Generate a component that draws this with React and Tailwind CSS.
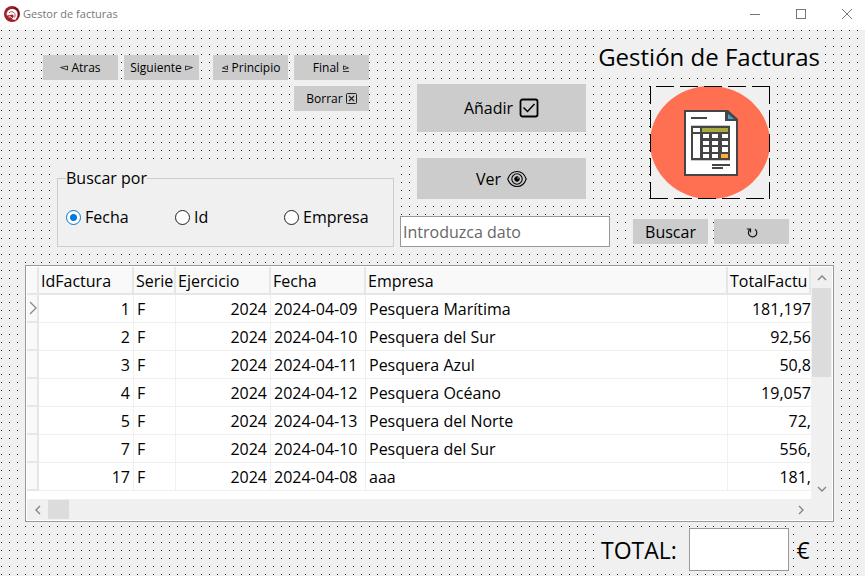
import React from "react";

const invoices = [
  { id: 1, serie: "F", year: 2024, date: "2024-04-09", company: "Pesquera Marítima", total: "181,197" },
  { id: 2, serie: "F", year: 2024, date: "2024-04-10", company: "Pesquera del Sur", total: "92,56" },
  { id: 3, serie: "F", year: 2024, date: "2024-04-11", company: "Pesquera Azul", total: "50,8" },
  { id: 4, serie: "F", year: 2024, date: "2024-04-12", company: "Pesquera Océano", total: "19,057" },
  { id: 5, serie: "F", year: 2024, date: "2024-04-13", company: "Pesquera del Norte", total: "72," },
  { id: 7, serie: "F", year: 2024, date: "2024-04-10", company: "Pesquera del Sur", total: "556," },
  { id: 17, serie: "F", year: 2024, date: "2024-04-08", company: "aaa", total: "181," },
];

function AppLogo() {
  return (
    <svg width="16" height="16" viewBox="0 0 16 16" aria-hidden="true">
      <circle cx="8" cy="8" r="8" fill="#a01f29" />
      <path d="M10 1.500a7 7 0 0 1 4 9.500" fill="none" stroke="#641118" strokeWidth="1.500" />
      <path d="M2.500 7.500C3.200 4.500 6 2.600 8.800 3c3 .3 5 2.600 4.700 5.600-.1 2-.8 3.600-2.200 5.400L7.500 13l1.800-1.800c.6-1 .4-2-.5-2.500-.9-.5-1.900-.1-3.100.5-.9.300-1.500.2-1.700-.4L3 10z" fill="#fff" />
      <path d="M5 6.800c1.400-1.300 3.600-1.500 5-.2 1.300 1.200 1.400 3 .6 5" fill="none" stroke="#a01f29" strokeWidth="0.800" />
      <path d="m4.500 11 2-.3 1.200 1.300" fill="none" stroke="#fff" strokeWidth="0.900" />
    </svg>
  );
}

function Triangle({ flip, underline }) {
  return (
    <svg width="8" height="10" viewBox="0 0 8 10" fill="none" stroke="#222" strokeWidth="0.900" aria-hidden="true">
      <g transform={flip ? "translate(8 0) scale(-1 1)" : undefined}>
        {underline ? (
          <path d="M6.500 2.800v3.700L1.500 5zM1 8.500h6" />
        ) : (
          <path d="M7.500 3v4L.5 4.500z" />
        )}
      </g>
    </svg>
  );
}

function BoxedCross() {
  return (
    <svg width="11" height="11" viewBox="0 0 11 11" fill="none" stroke="#222" aria-hidden="true">
      <rect x="0.500" y="0.500" width="10" height="10" rx="1" />
      <path d="m3 3 5 5M8 3 3 8" strokeWidth="1.200" />
    </svg>
  );
}

function BoxedCheck() {
  return (
    <svg width="20" height="20" viewBox="0 0 20 20" fill="none" stroke="#000" aria-hidden="true">
      <rect x="1.500" y="1.500" width="17" height="17" rx="2" strokeWidth="1.800" />
      <path d="m4.500 9.500 4 4 7-7.500" strokeWidth="1.500" />
    </svg>
  );
}

function Eye() {
  return (
    <svg width="20" height="18" viewBox="0 0 20 18" fill="none" stroke="#000" aria-hidden="true">
      <path d="M.8 9C2.500 4 6 1.500 10 1.500S17.500 4 19.200 9c-1.700 5-5.200 7.500-9.200 7.500S2.500 14 .8 9z" strokeWidth="1.100" />
      <circle cx="10" cy="9" r="5.200" strokeWidth="1.100" />
      <circle cx="10" cy="9" r="2.300" fill="#000" />
      <circle cx="11" cy="8" r="0.700" fill="#ccc" stroke="none" />
    </svg>
  );
}

function Reload() {
  return (
    <svg width="12" height="12" viewBox="0 0 12 12" fill="none" stroke="#111" strokeWidth="1.200" aria-hidden="true">
      <path d="M9 3.200a4.200 4.200 0 1 1-5.200.3" />
      <path d="M.8 3h3.700v3.500" />
    </svg>
  );
}

function InvoicePicture() {
  return (
    <svg width="120" height="113" viewBox="0 0 120 113" role="img" aria-label="Factura">
      <rect width="120" height="113" fill="#f0f0f0" />
      <ellipse cx="60" cy="56.500" rx="60" ry="56.500" fill="#ff7053" />
      <path d="M6 .5h114M0 112.500h120" stroke="#000" strokeDasharray="18 6" />
      <path d="M.5 0v113M119.500 0v113" stroke="#000" strokeDasharray="18 6" />
      <path d="M35 25h41l11 10v54H35z" fill="#fff" stroke="#454545" strokeWidth="2" />
      <path d="M75 24h3l10 9v2H75z" fill="#454545" />
      <path d="M78 28v5h6z" fill="#35a8e0" />
      <path d="M41 32h16" stroke="#454545" strokeWidth="2" />
      <path d="M41 39.500h39M41 74.500h39" stroke="#c8c8c8" />
      <rect x="41" y="40" width="39" height="34" fill="#454545" />
      <rect x="43" y="42" width="7" height="4" fill="#fff" />
      <rect x="52" y="42" width="26" height="4" fill="#aaab3f" />
      <rect x="43" y="48" width="7" height="24" fill="#fff" />
      <g fill="#fff">
        <path d="M53 48h6v4h-6zM62 48h6v4h-6zM72 48h6v4h-6z" />
        <path d="M53 55h6v4h-6zM62 55h6v4h-6zM72 55h6v4h-6z" />
        <path d="M53 61h6v5h-6zM62 61h6v5h-6zM72 61h6v5h-6z" />
        <path d="M53 68h6v4h-6zM62 68h6v4h-6z" />
      </g>
      <rect x="71" y="68" width="7" height="4" fill="#fbb034" />
      <path d="M62 79h18M62 82h11" stroke="#454545" strokeWidth="2" />
    </svg>
  );
}

function Chevron({ d }) {
  return (
    <svg width="10" height="10" viewBox="0 0 10 10" fill="none" stroke="#858585" strokeWidth="1.400" aria-hidden="true">
      <path d={d} />
    </svg>
  );
}

function SmallButton({ children, className = "" }) {
  return (
    <button type="button" className={`flex h-[25px] w-[75px] items-center justify-center gap-[3px] bg-[#ccc] text-xs whitespace-nowrap ${className}`}>
      {children}
    </button>
  );
}

function SearchOption({ label, defaultChecked }) {
  return (
    <label className="flex items-center gap-1">
      <input
        type="radio"
        name="criterio"
        defaultChecked={defaultChecked}
        className="size-[15px] appearance-none rounded-full border border-[#222] bg-white bg-clip-padding checked:border-[#0078d7] checked:bg-[radial-gradient(circle,#0078d7_3px,#fff_4px)]"
      />
      {label}
    </label>
  );
}

const head = "border-r-2 border-b-2 border-[#e6e6e6] bg-[#f9f9f9] px-[2px] pt-[2px] text-left font-normal whitespace-nowrap";
const cell = "border-r border-b border-[#f0f0f0] px-[3px] whitespace-nowrap";

function InvoiceGrid() {
  return (
    <section className="border border-[#999] bg-white p-px">
      <div className="flex">
        <div className="h-[232px] min-w-0 flex-1 overflow-hidden">
          <table className="w-full table-fixed border-separate border-spacing-0">
            <colgroup>
              <col className="w-[12px]" />
              <col className="w-[95px]" />
              <col className="w-[42px]" />
              <col className="w-[95px]" />
              <col className="w-[95px]" />
              <col />
              <col className="w-[83px]" />
            </colgroup>
            <thead>
              <tr className="h-[28px]">
                <th className={head} aria-label="Fila actual" />
                <th className={head}>IdFactura</th>
                <th className={head}>Serie</th>
                <th className={head}>Ejercicio</th>
                <th className={head}>Fecha</th>
                <th className={head}>Empresa</th>
                <th className={head}>TotalFactu</th>
              </tr>
            </thead>
            <tbody>
              {invoices.map((row, i) => (
                <tr key={row.id} className="h-[28px]">
                  <td className="border-r-2 border-b-2 border-[#e6e6e6] bg-[#f9f9f9]">
                    {i === 0 && (
                      <svg width="10" height="14" viewBox="0 0 10 14" fill="none" stroke="#8a8a8a" strokeWidth="1.300" aria-hidden="true">
                        <path d="m3 1 6 6-6 6" />
                      </svg>
                    )}
                  </td>
                  <td className={`${cell} text-right`}>{row.id}</td>
                  <td className={cell}>{row.serie}</td>
                  <td className={`${cell} text-right`}>{row.year}</td>
                  <td className={cell}>{row.date}</td>
                  <td className={cell}>{row.company}</td>
                  <td className="border-b border-[#f0f0f0] text-right whitespace-nowrap">{row.total}</td>
                </tr>
              ))}
            </tbody>
          </table>
        </div>
        <div className="flex w-[21px] flex-col items-center bg-[#f0f0f0]">
          <div className="flex h-[21px] items-center">
            <Chevron d="m1 7 4-4 4 4" />
          </div>
          <div className="h-[89px] w-[19px] bg-[#dcdcdc]" />
          <div className="mt-auto flex h-[21px] items-center">
            <Chevron d="m1 3 4 4 4-4" />
          </div>
        </div>
      </div>
      <div className="flex h-[21px] items-center bg-[#f0f0f0] pr-[21px]">
        <div className="flex w-[21px] justify-center">
          <Chevron d="M7 1 3 5l4 4" />
        </div>
        <div className="h-[19px] w-[21px] bg-[#dcdcdc]" />
        <div className="ml-auto flex w-[21px] justify-center">
          <Chevron d="m3 1 4 4-4 4" />
        </div>
      </div>
    </section>
  );
}

export default function App() {
  return (
    <div className="flex min-h-screen flex-col bg-[#f0f0f0] font-['Open_Sans','Noto_Sans',sans-serif] text-base leading-6 text-black">
      <header className="flex h-[30px] items-center bg-white pb-[2px] pl-1">
        <AppLogo />
        <span className="ml-[3px] text-[11px] text-[#777]">Gestor de facturas</span>
        <div className="ml-auto flex">
          <button type="button" aria-label="Minimizar" className="flex h-[28px] w-[46px] items-center justify-center">
            <svg width="10" height="10" viewBox="0 0 10 10" stroke="#777"><path d="M0 5.500h10" /></svg>
          </button>
          <button type="button" aria-label="Maximizar" className="flex h-[28px] w-[46px] items-center justify-center">
            <svg width="10" height="10" viewBox="0 0 10 10" fill="none" stroke="#777"><rect x="0.500" y="0.500" width="9" height="9" /></svg>
          </button>
          <button type="button" aria-label="Cerrar" className="flex h-[28px] w-[41px] items-center pl-[18px]">
            <svg width="10" height="10" viewBox="0 0 10 10" stroke="#777"><path d="m0 0 10 10M10 0 0 10" /></svg>
          </button>
        </div>
      </header>

      <main className="flex-1 bg-[linear-gradient(90deg,#f0f0f0_7px,transparent_7px),linear-gradient(#f0f0f0_7px,#222211_7px)] bg-[length:8px_8px] bg-[position:2px_1px] pr-[31px] pl-[25px]">
        <div className="flex justify-between pb-[18px]">
          <div className="flex w-[369px] flex-col pt-[25px]">
            <nav className="ml-[18px] grid w-[326px] grid-cols-[75px_75px_75px_75px] gap-y-[6px]">
              <SmallButton><Triangle /> Atras</SmallButton>
              <SmallButton className="ml-[6px]">Siguiente <Triangle flip /></SmallButton>
              <SmallButton className="ml-[20px]"><Triangle underline /> Principio</SmallButton>
              <SmallButton className="ml-[26px]">Final <Triangle flip underline /></SmallButton>
              <SmallButton className="col-start-4 ml-[26px]">Borrar <BoxedCross /></SmallButton>
            </nav>
            <div className="mt-auto ml-8 bg-[#f0f0f0] pt-1">
              <fieldset className="border border-[#ccc] pb-[17px] pl-2">
                <legend className="leading-[21px]">Buscar por</legend>
                <div className="grid grid-cols-3 pt-[16px]">
                  <SearchOption label="Fecha" defaultChecked />
                  <SearchOption label="Id" />
                  <SearchOption label="Empresa" />
                </div>
              </fieldset>
            </div>
          </div>

          <div className="flex w-[434px] flex-col pt-[10px]">
            <h1 className="mr-[10px] self-end bg-[#f0f0f0] px-1 text-2xl leading-[34px] whitespace-nowrap">Gestión de Facturas</h1>
            <div className="mt-[10px] flex">
              <div className="flex w-[210px] flex-col gap-[26px] pr-6 pl-[17px]">
                <button type="button" className="flex h-[48px] items-center justify-center gap-1.5 bg-[#ccc]">Añadir <BoxedCheck /></button>
                <button type="button" className="flex h-[41px] items-center justify-center gap-1.5 bg-[#ccc]">Ver <Eye /></button>
              </div>
              <div className="flex flex-1 items-end pl-10">
                <InvoicePicture />
              </div>
            </div>
            <div className="mt-[17px] flex items-center">
              <input type="text" aria-label="Dato a buscar" placeholder="Introduzca dato" className="h-[31px] w-[210px] border border-[#999] bg-white px-[2px] placeholder:text-[#666]" />
              <button type="button" className="ml-[23px] h-[25px] w-[75px] bg-[#ccc]">Buscar</button>
              <button type="button" aria-label="Recargar" className="ml-[6px] flex h-[25px] w-[75px] items-center justify-center bg-[#ccc]"><Reload /></button>
            </div>
          </div>
        </div>

        <InvoiceGrid />

        <div className="mr-[22px] flex items-center justify-end gap-[5px] pt-[6px] text-[23px]">
          <label htmlFor="total" className="w-[87px] bg-[#f0f0f0] pl-1 leading-9">TOTAL:</label>
          <input id="total" type="text" className="h-[43px] w-[100px] border border-[#999] bg-white px-1" />
          <span className="w-[18px] bg-[#f0f0f0] text-center leading-9">€</span>
        </div>
      </main>
    </div>
  );
}
